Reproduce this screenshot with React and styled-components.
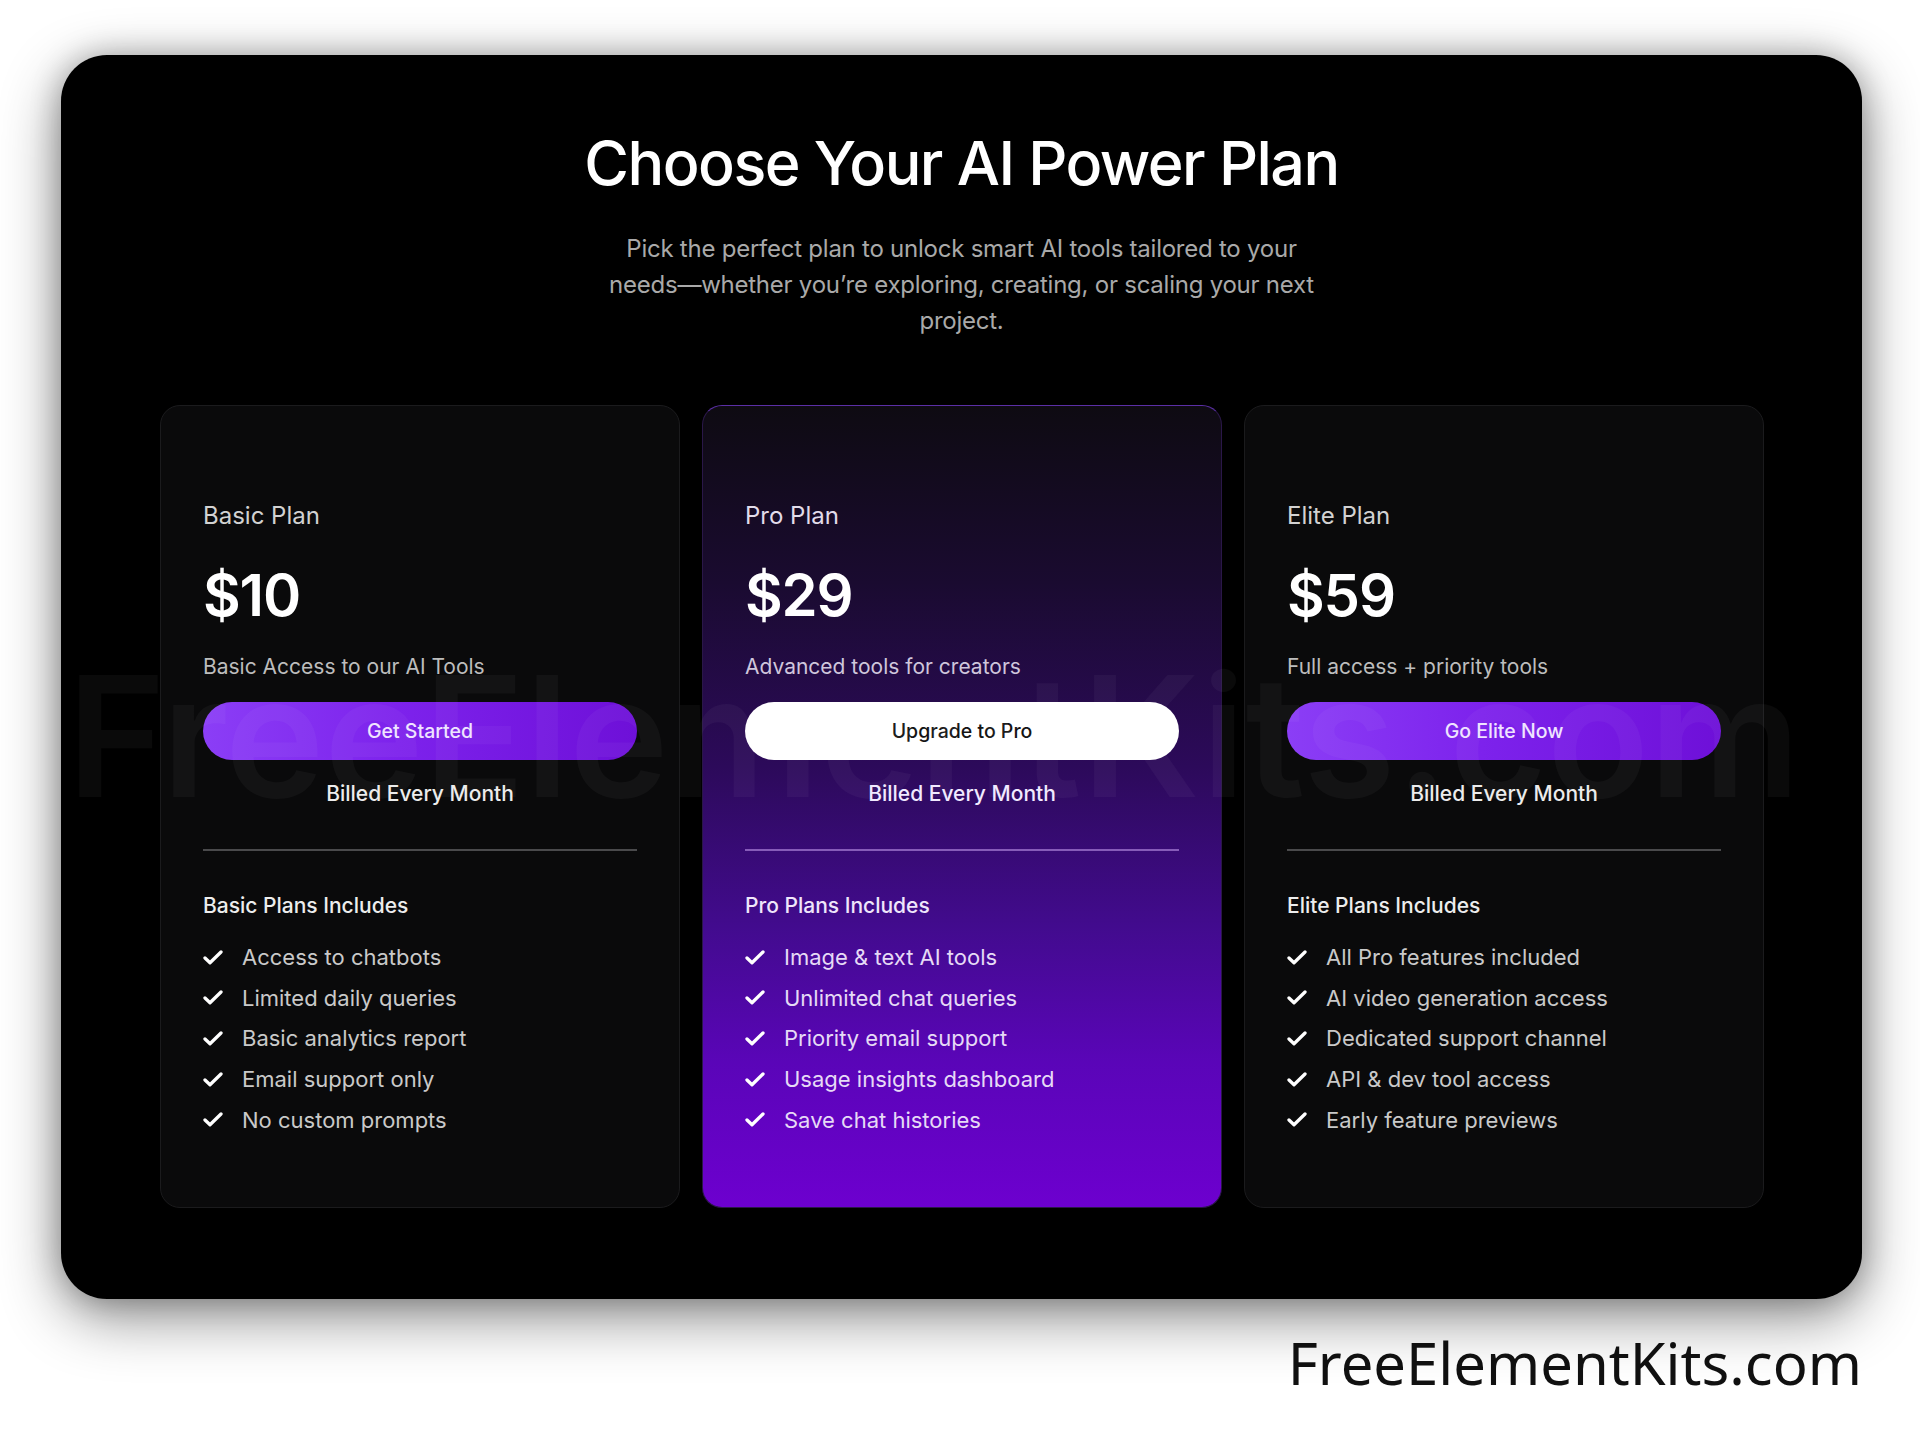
import React from 'react'
import styled, { createGlobalStyle } from 'styled-components'

const GlobalStyle = createGlobalStyle`
  * {
    box-sizing: border-box;
    margin: 0;
    padding: 0;
  }
  body {
    background: #ffffff;
    font-family: Inter, 'Noto Sans', sans-serif;
  }
`

const Page = styled.main`
  width: 1920px;
  height: 1440px;
  padding: 55px 58px 0 61px;
  overflow: hidden;
`

const Panel = styled.section`
  position: relative;
  width: 1801px;
  background: #000000;
  border-radius: 46px;
  padding: 72px 99px 91px;
  overflow: hidden;
  box-shadow: 0 18px 60px rgba(0, 0, 0, 0.45), 0 0 30px rgba(0, 0, 0, 0.25);
`

const Watermark = styled.div`
  position: absolute;
  left: 6px;
  top: 597px;
  font-family: Inter, sans-serif;
  font-weight: 600;
  font-size: 168px;
  line-height: 1;
  white-space: nowrap;
  color: rgba(255, 255, 255, 0.04);
  pointer-events: none;
  z-index: 2;
`

const Header = styled.header`
  display: flex;
  flex-direction: column;
  align-items: center;
  text-align: center;
`

const Title = styled.h1`
  font-size: 61px;
  line-height: 72px;
  font-weight: 500;
  letter-spacing: -0.025em;
  color: #ffffff;
`

const Subtitle = styled.p`
  margin-top: 32px;
  max-width: 735px;
  font-size: 24px;
  line-height: 36px;
  letter-spacing: -0.01em;
  color: #a9a9a9;
`

const Grid = styled.div`
  margin-top: 66px;
  display: grid;
  grid-template-columns: repeat(3, 520px);
  gap: 22px;
`

const Card = styled.article`
  display: flex;
  flex-direction: column;
  padding: 95px 42px 73px;
  border-radius: 20px;
  border: 1px solid ${p => (p.$featured ? '#2a1748' : '#1b1b1d')};
  border-top-color: ${p => (p.$featured ? '#5b2fa6' : '#1b1b1d')};
  background: ${p =>
    p.$featured
      ? 'linear-gradient(180deg, #0e0b12 0%, #1a0b30 22%, #2c0a5a 45%, #420b8e 65%, #5a05b8 82%, #6d00cf 100%)'
      : '#0a0a0b'};
`

const PlanName = styled.h3`
  font-size: 24px;
  line-height: 30px;
  font-weight: 400;
  color: ${p => (p.$featured ? '#e2dcea' : '#d2d2d2')};
`

const Price = styled.div`
  margin-top: 30px;
  font-size: 58px;
  line-height: 68px;
  font-weight: 600;
  letter-spacing: -0.02em;
  color: #ffffff;
`

const Tagline = styled.p`
  margin-top: 24px;
  font-size: 21px;
  line-height: 28px;
  color: ${p => (p.$featured ? '#cfc6dc' : '#bdbdbd')};
`

const Action = styled.button`
  margin-top: 21px;
  height: 58px;
  width: 100%;
  border: none;
  border-radius: 29px;
  font-family: Inter, sans-serif;
  font-size: 19.5px;
  font-weight: 500;
  cursor: pointer;
  color: ${p => (p.$light ? '#141414' : '#efe4ff')};
  background: ${p =>
    p.$light ? '#ffffff' : 'linear-gradient(90deg, #8b3ef6 0%, #7d22ec 45%, #6e10d8 100%)'};
`

const Billing = styled.p`
  margin-top: 20px;
  text-align: center;
  font-size: 21px;
  line-height: 28px;
  font-weight: 500;
  color: ${p => (p.$featured ? '#f1e9ff' : '#ececec')};
`

const Divider = styled.hr`
  margin-top: 41px;
  border: none;
  height: 2px;
  background: ${p => (p.$featured ? 'rgba(200, 160, 240, 0.55)' : '#4a4a4c')};
`

const IncludesTitle = styled.h4`
  margin-top: 41px;
  font-size: 21px;
  line-height: 28px;
  font-weight: 500;
  color: ${p => (p.$featured ? '#efe6fb' : '#ededed')};
`

const FeatureList = styled.ul`
  margin-top: 23px;
  list-style: none;
  display: flex;
  flex-direction: column;
  gap: 12.7px;
`

const Feature = styled.li`
  display: flex;
  align-items: center;
  gap: 19px;
  font-size: 22px;
  line-height: 28px;
  color: ${p => (p.$featured ? '#e6daf6' : '#c9c9c9')};

  svg {
    flex: none;
  }
`

const Footer = styled.div`
  margin-top: 29px;
  text-align: right;
  padding-right: 0;
  font-family: 'Noto Sans', 'Open Sans', sans-serif;
  font-size: 58px;
  line-height: 70px;
  color: #111111;
`

const CheckIcon = () => (
  <svg width="20" height="15" viewBox="0 0 20 15" fill="none">
    <path d="M2 8 L7 12.8 L18 2" stroke="#ffffff" strokeWidth="3.3" strokeLinecap="round" strokeLinejoin="round" />
  </svg>
)

const plans = [
  {
    name: 'Basic Plan',
    price: '$10',
    tagline: 'Basic Access to our AI Tools',
    action: 'Get Started',
    includes: 'Basic Plans Includes',
    features: [
      'Access to chatbots',
      'Limited daily queries',
      'Basic analytics report',
      'Email support only',
      'No custom prompts',
    ],
  },
  {
    name: 'Pro Plan',
    price: '$29',
    tagline: 'Advanced tools for creators',
    action: 'Upgrade to Pro',
    includes: 'Pro Plans Includes',
    featured: true,
    features: [
      'Image & text AI tools',
      'Unlimited chat queries',
      'Priority email support',
      'Usage insights dashboard',
      'Save chat histories',
    ],
  },
  {
    name: 'Elite Plan',
    price: '$59',
    tagline: 'Full access + priority tools',
    action: 'Go Elite Now',
    includes: 'Elite Plans Includes',
    features: [
      'All Pro features included',
      'AI video generation access',
      'Dedicated support channel',
      'API & dev tool access',
      'Early feature previews',
    ],
  },
]

export default function App() {
  return (
    <Page>
      <GlobalStyle />
      <Panel>
        <Header>
          <Title>Choose Your AI Power Plan</Title>
          <Subtitle>
            Pick the perfect plan to unlock smart AI tools tailored to your needs—whether you’re exploring,
            creating, or scaling your next project.
          </Subtitle>
        </Header>
        <Grid>
          {plans.map(plan => (
            <Card key={plan.name} $featured={plan.featured}>
              <PlanName $featured={plan.featured}>{plan.name}</PlanName>
              <Price>{plan.price}</Price>
              <Tagline $featured={plan.featured}>{plan.tagline}</Tagline>
              <Action $light={plan.featured}>{plan.action}</Action>
              <Billing $featured={plan.featured}>Billed Every Month</Billing>
              <Divider $featured={plan.featured} />
              <IncludesTitle $featured={plan.featured}>{plan.includes}</IncludesTitle>
              <FeatureList>
                {plan.features.map(f => (
                  <Feature key={f} $featured={plan.featured}>
                    <CheckIcon />
                    {f}
                  </Feature>
                ))}
              </FeatureList>
            </Card>
          ))}
        </Grid>
        <Watermark>FreeElementKits.com</Watermark>
      </Panel>
      <Footer>FreeElementKits.com</Footer>
    </Page>
  )
}
